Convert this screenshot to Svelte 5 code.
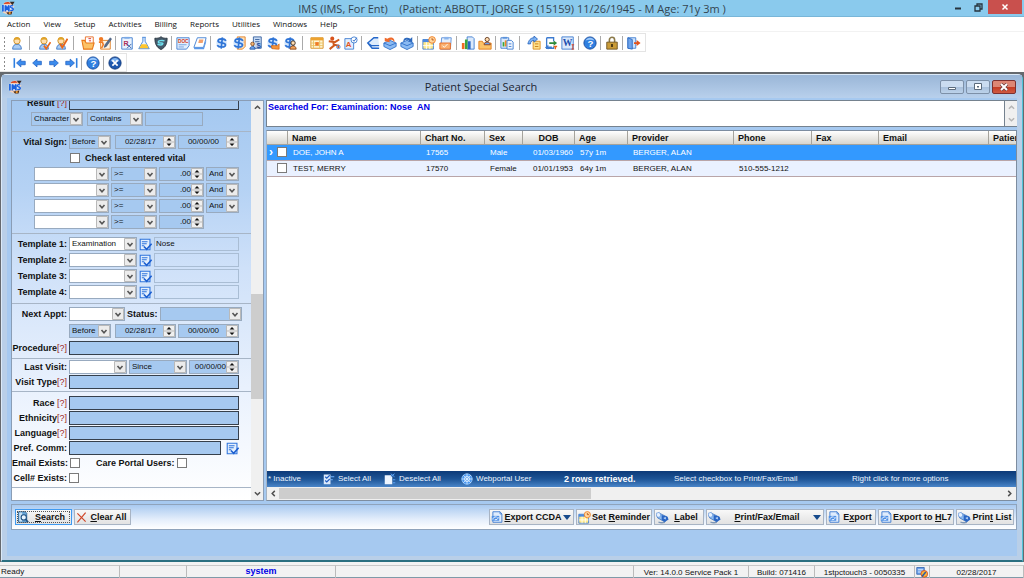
<script>
  const menus = ['Action', 'View', 'Setup', 'Activities', 'Billing', 'Reports', 'Utilities', 'Windows', 'Help'];

  const person = '<path d="M3 15c0-4 2-5.500 5-5.500s5 1.500 5 5.500z" fill="#a9cdf6" stroke="#3f78c4"/><circle cx="8" cy="5.500" r="3.600" fill="#ffe0b0" stroke="#c98a1d"/><path d="M4.300 5c0-5 7.400-5 7.400 0-2-1.500-5-1.500-7.400 0z" fill="#e0a32c"/>';
  const dollar = '<ellipse cx="7.500" cy="8" rx="6" ry="6" fill="#d3e6fc"/><path d="M12.500 5.500C11 2.300 3.500 2.600 3.500 5.600c0 3 8.500 1.600 8.500 4.600 0 3-7.500 3.200-9.500 .3M8.500 1.500l-1.500 13" fill="none" stroke="#2f74d6" stroke-width="1.900"/>';
  const orangeTick = '<path d="M8 11l2.500 3.500L15.500 7" fill="none" stroke="#e8681c" stroke-width="2"/>';
  const blueArrow = (d) => `<path d="${d}" fill="#3b8bec" stroke="#1c5cc0" stroke-width=".8"/>`;

  const icons = {
    ims: '<path d="M3 3c2-3 8-3 10 0l2 3-2 8-6 1.500L2 13z" fill="#f3d2bd"/><path d="M3 3.500C4 .5 10 .2 11 3z" fill="#d9441f"/><path d="M10 .8h5.500l-2.500 4z" fill="#372820"/><path d="M1 4.500h13v7H1z" fill="#e4eefb"/><path d="M2.200 4.500v7.500M5 12V5l2 4 2-4v7" fill="none" stroke="#1b62e0" stroke-width="2"/><path d="M14 5.500c-4-1-4 2-1.500 2.500s2 3.500-2 2.700" fill="none" stroke="#1b62e0" stroke-width="1.600"/><path d="M6 13l7-1-1 3.500H8z" fill="#4a2d1c"/><circle cx="10" cy="13.800" r="1.300" fill="#f39b2b"/>',
    person,
    personCheck: person + orangeTick,
    personEdit: person + '<path d="M7 9l2.500 4L15.500 3" fill="none" stroke="#e8681c" stroke-width="2.200"/>',
    folder: '<path d="M5 1h9v8H5z" fill="#fff" stroke="#e8681c"/><path d="M8.500 3h3M9 5.500h2.500" stroke="#d22"/><path d="M1 5h3l2 3h9l-2 7H3z" fill="#fcc267" stroke="#e8781b" stroke-width="1.200"/>',
    noteEdit: '<path d="M3 5h11v10H3z" fill="#fff4e2" stroke="#e07b1b"/><circle cx="3.500" cy="3.500" r="2.500" fill="#f07a24"/><path d="M1 7h4l1 3-2 4" fill="none" stroke="#f07a24" stroke-width="1.800"/><path d="M7 13l1-3 6-8 1.500 1.500L9.500 12z" fill="#5b6d88" stroke="#27436f" stroke-width=".6"/>',
    rx: '<path d="M2 2h12v13H2z" fill="#e9f2fd" stroke="#3d7bd0"/><path d="M5 1h6v2H5z" fill="#7aa9e6"/><text x="4" y="11" font-family="Liberation Sans" font-size="8" font-weight="bold" fill="#b0305a">R</text><path d="M8 9l5 5m0-5l-5 5" stroke="#27549e"/>',
    flask: '<path d="M6 1.500h4M6.700 1.500V6L2 14.500h12L9.300 6V1.500" fill="#e7f2ff" stroke="#3c80d8"/><path d="M5 9.500h6l2.300 4.500H2.700z" fill="#ffc62d"/>',
    shield: '<path d="M8 .8c2 1.700 4.500 2 7 1.700C15 9 13 13 8 15.500 3 13 1 9 1 2.500 3.500 2.800 6 2.500 8 .8z" fill="#45596a" stroke="#26323b"/><path d="M12 5.500c-3-1-8 0-7 1.700s6-.2 5 1.800-4 1.500-6 .4" fill="none" stroke="#6fe0ef" stroke-width="1.600"/>',
    docText: '<path d="M1 2h14v9l-3 4H1z" fill="#e3effd" stroke="#3d7bd0"/><text x="2.200" y="7.500" font-family="Liberation Sans" font-size="5.500" font-weight="bold" fill="#d33a1a">DOC</text><path d="M3 10h9M3 12.500h6" stroke="#6a9ade"/>',
    book: '<path d="M5 2h10l-3 11H1z" fill="#fff" stroke="#3d7bd0"/><path d="M7 4h5l-1 4H6z" fill="#f3a06b"/><path d="M1 13h11l3-9v3l-2.500 8H1.500z" fill="#5a97e8"/>',
    dollar,
    dollarNote: '<path d="M6 1h9v11l-3 3H6z" fill="#ffe2b8" stroke="#e07b1b"/><path d="M11 7h3m-3 3h2" stroke="#e8681c"/>' + dollar,
    dollarBuilding: '<path d="M5 1h9v13H5z" fill="#c6daf4" stroke="#355e9c"/><path d="M7 4h5M7 6.500h5" stroke="#355e9c"/><text x="8.500" y="14" font-family="Liberation Sans" font-size="9" font-weight="bold" fill="#1c4da0">$</text><path d="M1 15c0-4 6-4 6 0z" fill="#6ea4ec" stroke="#2a5aa6"/><circle cx="4" cy="9" r="2" fill="#f3b878" stroke="#8c4b1c"/>',
    dollarHand: dollar + '<path d="M6 11h7l2-2v6h-2l-6-.5z" fill="#f6953d" stroke="#d9660f" stroke-width=".8"/>',
    dollarPerson: dollar + '<path d="M8 15c0-5 7-5 7 0z" fill="#f1a25a" stroke="#8b4719"/><circle cx="11.500" cy="8" r="2.500" fill="#ffdcb0" stroke="#3b2a1c"/>',
    calendar: '<path d="M1 2h14v12H1z" fill="#fff6d6" stroke="#d78d1b"/><path d="M1 2h14v3H1z" fill="#eda22f"/><path d="M4 5v9m7-9v9M1 8h14M1 11h14" stroke="#e8c060"/><path d="M6 7h4v4H6z" fill="#f07a24"/>',
    runner: '<circle cx="6" cy="3" r="2.300" fill="#d9521c"/><path d="M2 6l7 1 5-3M7 7l1 4-5 4M8 10l5 1v3" fill="none" stroke="#cf5a1e" stroke-width="2.200"/><circle cx="13" cy="12.500" r="2" fill="none" stroke="#4b8ae0"/>',
    letterA: '<path d="M1 3h10v12H1z" fill="#e3effd" stroke="#3d7bd0"/><text x="2" y="13" font-family="Liberation Sans" font-size="9" font-weight="bold" fill="#e2531c">A</text><circle cx="11.500" cy="4.500" r="3.500" fill="#fff" stroke="#3d7bd0"/><path d="M10 4.500l1.500 1.500 3-4" fill="none" stroke="#1f5fc0"/>',
    arrowBook: '<path d="M14 2H9L2 8l4 3h9M2 8l5 6h8" fill="#dcebfc" stroke="#2467c9" stroke-width="1.500"/>',
    mailIn: '<path d="M1 8l7-3 7 3v4l-7 3.500L1 12z" fill="#8bbaf2" stroke="#2f6fc8"/><path d="M1 8l7 3 7-3" fill="none" stroke="#2f6fc8"/><path d="M2 2l3 1c4-3 9-1 8 4-2-3-4-3-6-2l1 2-6-1z" fill="#ee6a2c"/>',
    mailOut: '<path d="M1 8l7-3 7 3v4l-7 3.500L1 12z" fill="#8bbaf2" stroke="#2f6fc8"/><path d="M1 8l7 3 7-3" fill="none" stroke="#2f6fc8"/><path d="M14 1v6L9 6l1.500-1C8 4 6 4 4 7c-1-5 4-6 8-4z" fill="#2d69bd"/>',
    reminder: '<path d="M1 4h12v11H1z" fill="#ffe98a" stroke="#3d7bd0"/><path d="M1 4h12v3H1z" fill="#4b8ae0"/><path d="M5 7v8m4-8v8M1 11h12" stroke="#fff"/><circle cx="11.500" cy="4.500" r="3.800" fill="#ffd7a0" stroke="#ef7b21"/><path d="M11.500 2.500v2h2" fill="none" stroke="#b34a0b"/>',
    clipCheck: '<path d="M3 2h11l-1 13H2z" fill="#e3effd" stroke="#5b8fd8"/><path d="M6 1h5v3H6z" fill="#8ab4ec"/><path d="M1 8h12v7H1z" fill="#f9b070" stroke="#e8681c"/><path d="M4 11l2 2 4-4" stroke="#fff" fill="none"/>',
    chart: '<path d="M7 1h6l2 2v12H7z" fill="#dbe9fb" stroke="#3d7bd0"/><path d="M1 8h3v7H1z" fill="#ef6b22"/><path d="M4.500 4h3v11h-3z" fill="#3aa53d"/><path d="M8 6h3v9H8z" fill="#2a66c4"/>',
    folderPerson: '<path d="M1 6h4l1 2h9v7H1z" fill="#fcc267" stroke="#e07b1b"/><path d="M7 10c0-4 7-4 7 0z" fill="#6ea4ec" stroke="#8b3b19"/><circle cx="10.500" cy="4" r="2.400" fill="#ffdcb0" stroke="#5b3016"/>',
    report: '<path d="M1 2h9v12H1z" fill="#dbe9fb" stroke="#3d7bd0"/><path d="M3 1h5v2H3z" fill="#5a92dc"/><path d="M3 7h2v5H3z" fill="#3aa53d"/><path d="M5.500 5h2v7h-2z" fill="#ef8b22"/><path d="M8 5h5l2 2v8H8z" fill="#edf4fe" stroke="#3d7bd0"/><path d="M10 9h3m-3 3h3" stroke="#3d7bd0"/>',
    sendNote: '<path d="M7 6h8v9H7z" fill="#ffe08a" stroke="#d98b1c"/><path d="M9 9h4m-4 3h4" stroke="#c57a17"/><path d="M1 9h3C4 6 6 5 8 5v2l4-3.500L8 0v2C4 2 2 5 1 9z" fill="#7eb2f2" stroke="#2b68bf"/>',
    swap: '<path d="M3 2h8v4M3 2v12h8v-2" fill="none" stroke="#3d7bd0" stroke-width="1.500"/><path d="M6 7h5V5l4 3-4 3V9H6z" fill="#2f8b3a"/><path d="M9 12H5v-2l-4 3 4 2.500V14h4z" fill="#3d7bd0"/><path d="M11 12h4m-2 0v3" stroke="#e8681c" stroke-width="1.500"/>',
    word: '<path d="M1 1h13v14H1z" fill="#dbe9fb" stroke="#3d7bd0"/><text x="2" y="11" font-family="Liberation Serif" font-size="11" font-weight="bold" fill="#1c4fae">W</text><path d="M12 10h3m-1.500 0v5m-1.500 0h3" stroke="#d33a1a"/>',
    help: '<circle cx="8" cy="8" r="7" fill="#2f7fe0" stroke="#174a9c"/><path d="M3 5c2-4 8-4 10 0-3-1-7-1-10 0z" fill="#9cc8fa"/><text x="5" y="12.500" font-family="Liberation Sans" font-size="11" font-weight="bold" fill="#fff">?</text>',
    lock: '<path d="M5 7V4.500c0-4 6-4 6 0V7" fill="none" stroke="#8b7a4a" stroke-width="1.800"/><path d="M2 7h12v8H2z" fill="#c99b38" stroke="#6b5120"/><path d="M8 9v3.500" stroke="#3f2f12" stroke-width="2"/>',
    exit: '<path d="M1 2h9v12H1z" fill="#cfe2fb" stroke="#3d7bd0"/><path d="M1 2l5 2v11l-5-1z" fill="#6ea4ec" stroke="#2b68bf"/><path d="M8 7h3V4.500L15.500 8 11 11.500V9H8z" fill="#e2531c"/>',
    first: '<path d="M1.500 2.500v11" stroke="#2f7fe0" stroke-width="1.800"/>' + blueArrow('M4 8l5-4.500V6h5v4H9v2.500z'),
    prev: blueArrow('M3 8l5-4.500V6h5v4H8v2.500z'),
    next: blueArrow('M13 8L8 3.500V6H3v4h5v2.500z'),
    last: '<path d="M14.500 2.500v11" stroke="#2f7fe0" stroke-width="1.800"/>' + blueArrow('M12 8L7 3.500V6H2v4h5v2.500z'),
    close: '<circle cx="8" cy="8" r="7" fill="#1c57ae" stroke="#123a7c"/><path d="M2.800 6c2-5 8.500-5 10.400 0z" fill="#7fb4f2"/><path d="M5 5l6 6m0-6l-6 6" stroke="#fff" stroke-width="2"/>',
    pick: '<path d="M1.500 1.500h12v13h-12z" fill="#e3effd" stroke="#2f74dc" stroke-width="1.300"/><path d="M3.500 4.500h7M3.500 7h6M3.500 9.500h3" stroke="#2f74dc" stroke-width="1.300"/><path d="M6 10.500l3.500 3.500L15.500 7" fill="none" stroke="#1c5fd0" stroke-width="2"/>',
    find: '<path d="M2 1h9l2 2v12H2z" fill="#6ba8d8" stroke="#235e93"/><path d="M3 2h4v12H3z" fill="#c8e2f6"/><circle cx="9" cy="8.500" r="3.500" fill="#e8f5ff" stroke="#1d4f80" stroke-width="1.400"/><path d="M11.500 11l3.500 4" stroke="#1d4f80" stroke-width="2"/>',
    clear: '<path d="M2 2l12 12M14 1L2 15" stroke="#cf4527" stroke-width="1.700"/>',
    exportDoc: '<path d="M2.500 1H12l2.500 3v11h-12z" fill="#dfecfd" stroke="#3d7bd0" stroke-width="1.200"/><path d="M12 1v3h2.500" fill="none" stroke="#3d7bd0"/><path d="M1 6.500h10V13H1z" fill="#4f90e6"/><path d="M2.500 11.500c0-3 2.500-4 5-3.500M9.500 8c0 3-2 4-4.500 3.500" fill="none" stroke="#fff" stroke-width="1.200"/>',
    printer: '<path d="M1 4l4-1 9 4.500-3 6-9-5z" fill="#8ebcf0" stroke="#2b62b2" stroke-width=".8"/><path d="M0 3l4-1.500L6 5 4 8 1 7z" fill="#e4f0ff" stroke="#5b8fd8" stroke-width=".8"/><path d="M7 5l7 2 1.500 3.500-5 3L7 11z" fill="#2a66c4"/><path d="M9 8.500l3-1v3z" fill="#cfe4ff"/><path d="M3 13.500c3 1.500 6 1 8 .5" fill="none" stroke="#7d97b8" stroke-width="1.600"/>',
    selectAll: '<path d="M1 2h9v13H1z" fill="#dbe9fb"/><path d="M3 5l2 2 4-4M3 10l2 2 4-4" fill="none" stroke="#1d5bc0" stroke-width="1.500"/><path d="M10 5h5M10 9h3" stroke="#73b5ff" stroke-width="1.500"/>',
    deselectAll: '<path d="M1 3h8l2 2v10H1z" fill="#edf5ff"/><path d="M9 1l5 4m0-4l-5 4M12 9h3m-3 4h3" stroke="#5ba3f6" stroke-width="1.300"/>',
    globe: '<circle cx="8" cy="8" r="7" fill="#4b97f0" stroke="#9cccff"/><path d="M8 1v14M1 8h14M3 3l10 10M13 3L3 13" stroke="#e3f2ff"/><circle cx="8" cy="8" r="3.500" fill="none" stroke="#e3f2ff"/>',
    tray: '<path d="M1 2h10v9H1z" fill="#6ea4ec" stroke="#2559a8"/><path d="M2.500 5h7m-7 3h7" stroke="#fff"/><circle cx="11" cy="10.500" r="4.500" fill="#f7b43b" stroke="#d33a1a"/><path d="M8 14l5-6" stroke="#2559a8" stroke-width="1.800"/>'
  };

  const mainTools = [
    'person', '||', 'personCheck', 'personEdit', '||', 'folder', 'noteEdit', '|', 'rx', 'flask', 'shield', '|',
    'docText', 'book', '|', 'dollar', 'dollarNote', 'dollarBuilding', 'dollarHand', 'dollarPerson', '||',
    'calendar', 'runner', 'letterA', '|', 'arrowBook', 'mailIn', 'mailOut', '|', 'reminder', 'clipCheck', '|',
    'chart', 'folderPerson', '|', 'report', '||', 'sendNote', 'swap', 'word', '|', 'help', '|', 'lock', '|', 'exit'
  ];
  const navTools = ['first', 'prev', 'next', 'last', '|', 'help', '|', 'close'];

  const columns = [
    ['', 21], ['Name', 133], ['Chart No.', 64], ['Sex', 38], ['DOB', 52], ['Age', 53], ['Provider', 106],
    ['Phone', 78], ['Fax', 67], ['Email', 110], ['Patient', 60]
  ];
  const rows = [
    ['DOE, JOHN A', '17565', 'Male', '01/03/1960', '57y 1m', 'BERGER, ALAN', '', '', '', ''],
    ['TEST, MERRY', '17570', 'Female', '01/01/1953', '64y 1m', 'BERGER, ALAN', '510-555-1212', '', '', '']
  ];
  let selected = $state(0);

  const templates = [['Examination', 'Nose'], ['', ''], ['', ''], ['', '']];
  const joins = ['And', 'And', 'And', ''];
  const demographics = ['Race', 'Ethnicity', 'Language'];
</script>

{#snippet icon(name, size = 14)}
  <svg class="icon" width={size} height={size} viewBox="0 0 16 16" aria-hidden="true">{@html icons[name]}</svg>
{/snippet}

{#snippet combo(cls, value, label, id)}
  <select class="field combo {cls}" aria-label={label} {id}><option>{value}</option></select>
{/snippet}

{#snippet spin(cls, value, label)}
  <input class="field spin {cls}" type="text" {value} aria-label={label} />
{/snippet}

{#snippet tools(list)}
  {#each list as tool}
    {#if tool === '|' || tool === '||'}
      <span class="sep" class:wide={tool === '||'}></span>
    {:else}
      <button class="tool" aria-label={tool}>{@render icon(tool)}</button>
    {/if}
  {/each}
{/snippet}

{#snippet chevron(d)}
  <svg class="icon" width="7" height="7" viewBox="0 0 8 8" aria-hidden="true"><path {d} fill="none" stroke="currentColor" stroke-width="1.700" /></svg>
{/snippet}

<div class="app">
  <header class="titlebar">
    <span class="logo">{@render icon('ims')}</span>
    <h1>IMS (IMS, For Ent) &nbsp;&nbsp; (Patient: ABBOTT, JORGE S (15159) 11/26/1945 - M Age: 71y 3m )</h1>
    <div class="syscmds">
      <button aria-label="Minimize"><svg width="8" height="8" viewBox="0 0 8 8"><path d="M1 5.500h6" stroke="#26333d" stroke-width="2" /></svg></button>
      <button aria-label="Restore"><svg width="9" height="9" viewBox="0 0 9 9"><path d="M1 3h5v5H1zM3 2.500V1h5v5H6.500" fill="none" stroke="#26333d" stroke-width="1.300" /></svg></button>
      <button class="quit" aria-label="Close"><svg width="8" height="8" viewBox="0 0 8 8"><path d="M1.500 1.500l5 5m0-5l-5 5" stroke="#fff" stroke-width="1.500" /></svg></button>
    </div>
  </header>

  <nav class="menubar">
    {#each menus as menu}<button>{menu}</button>{/each}
  </nav>

  <div class="toolbars">
    <div class="toolbar"><span class="grip"></span>{@render tools(mainTools)}</div>
    <div class="toolbar nav"><span class="grip"></span>{@render tools(navTools)}</div>
  </div>

  <main class="workspace">
    <section class="window">
      <div class="wintitle">
        <span class="winlogo">{@render icon('ims')}</span>
        <h2>Patient Special Search</h2>
        <div class="wincmds">
          <button aria-label="Minimize window"><svg width="10" height="8" viewBox="0 0 10 8"><path d="M1.500 4.500h7v2h-7z" fill="#fff" stroke="#5c6b7c" /></svg></button>
          <button aria-label="Maximize window"><svg width="10" height="8" viewBox="0 0 10 8"><path d="M1.500 .5h7v6h-7z" fill="#fff" stroke="#5c6b7c" /><path d="M4 3h2v1.500H4z" fill="#5c6b7c" /></svg></button>
          <button class="winclose" aria-label="Close window"><svg width="10" height="8" viewBox="0 0 10 8"><path d="M2 1l6 6m0-6L2 7" stroke="#6b3a3a" stroke-width="3.400" /><path d="M2 1l6 6m0-6L2 7" stroke="#fff" stroke-width="2" /></svg></button>
        </div>
      </div>

      <div class="body">
        <div class="panes">
          <div class="filters">
            <form class="form">
              <div class="group">
                <div class="row"><label for="result">Result <i>[?]</i></label><input id="result" class="field strong fill" type="text" /></div>
                <div class="row indent-a">
                  {@render combo('w52', 'Character', 'Result type')}
                  <span class="space"></span>
                  {@render combo('w56', 'Contains', 'Result match')}
                  <input class="field w58" type="text" aria-label="Result value" />
                </div>
              </div>

              <div class="group">
                <div class="row">
                  <label for="vital">Vital Sign:</label>
                  {@render combo('w42', 'Before', 'Vital sign period', 'vital')}
                  <span class="space"></span>
                  {@render spin('date', '02/28/17', 'Vital sign from')}
                  {@render spin('date', '00/00/00', 'Vital sign to')}
                </div>
                <div class="row indent-b"><input type="checkbox" id="lastvital" /><label class="plain" for="lastvital">Check last entered vital</label></div>
                {#each joins as join, i}
                  <div class="row indent-c">
                    {@render combo('w75 white', '', `Vital ${i + 1}`)}
                    {@render combo('w46', '>=', `Vital ${i + 1} operator`)}
                    {@render spin('num', '.00', `Vital ${i + 1} value`)}
                    {#if join}{@render combo('w33', join, `Vital ${i + 1} join`)}{/if}
                  </div>
                {/each}
              </div>

              <div class="group">
                {#each templates as [kind, text], i}
                  <div class="row">
                    <label for="template{i}">Template {i + 1}:</label>
                    {@render combo('w68 white', kind, `Template ${i + 1}`, `template${i}`)}
                    <button type="button" class="pick" aria-label="Choose template {i + 1}">{@render icon('pick', 13)}</button>
                    <input class="field clear fill" type="text" value={text} aria-label="Template {i + 1} text" />
                  </div>
                {/each}
              </div>

              <div class="group loose">
                <div class="row">
                  <label for="appt">Next Appt:</label>
                  {@render combo('w56 white', '', 'Next appointment', 'appt')}
                  <label class="plain" for="status">Status:</label>
                  {@render combo('fill wider', '', 'Status', 'status')}
                </div>
                <div class="row">
                  <span class="label"></span>
                  {@render combo('w42', 'Before', 'Appointment period')}
                  <span class="space"></span>
                  {@render spin('date', '02/28/17', 'Appointment from')}
                  {@render spin('date', '00/00/00', 'Appointment to')}
                </div>
                <div class="row"><label for="procedure">Procedure<i>[?]</i></label><input id="procedure" class="field strong fill" type="text" /></div>
              </div>

              <div class="group tight">
                <div class="row">
                  <label for="lastvisit">Last Visit:</label>
                  {@render combo('w58 white', '', 'Last visit', 'lastvisit')}
                  {@render combo('w58', 'Since', 'Last visit period')}
                  {@render spin('fill', '00/00/00', 'Last visit date')}
                </div>
                <div class="row"><label for="visittype">Visit Type<i>[?]</i></label><input id="visittype" class="field strong fill" type="text" /></div>
              </div>

              <div class="group people">
                {#each demographics as name}
                  <div class="row"><label for={name}>{name}{name === 'Race' ? ' ' : ''}<i>[?]</i></label><input id={name} class="field strong fill" type="text" /></div>
                {/each}
                <div class="row comm">
                  <label for="comm">Pref. Comm:</label><input id="comm" class="field strong fill" type="text" />
                  <button type="button" class="pick" aria-label="Choose preferred communication">{@render icon('pick', 13)}</button>
                </div>
                <div class="row">
                  <label for="email">Email Exists:</label><input type="checkbox" id="email" />
                  <label class="plain portal" for="portal">Care Portal Users:</label><input type="checkbox" id="portal" />
                </div>
                <div class="row"><label for="cell">Cell# Exists:</label><input type="checkbox" id="cell" /></div>
              </div>
            </form>
            <div class="vscroll">
              {@render chevron('M1 5.500L4 2.500l3 3')}
              <div class="vtrack"><span class="vthumb"></span></div>
              {@render chevron('M1 2.500l3 3 3-3')}
            </div>
          </div>

          <div class="results">
            <div class="searched">
              <p>Searched For: Examination: Nose &nbsp;AN</p>
              <div class="vscroll idle">{@render chevron('M1 5.500L4 2.500l3 3')}{@render chevron('M1 2.500l3 3 3-3')}</div>
            </div>
            <div class="gridbox">
              <div class="tablewrap">
                <table>
                  <colgroup>{#each columns as [, width]}<col style="width:{width}px" />{/each}</colgroup>
                  <thead><tr>{#each columns as [name]}<th class:dob={name === 'DOB'}>{name}</th>{/each}</tr></thead>
                  <tbody>
                    {#each rows as row, i}
                      <tr class:selected={selected === i} onclick={() => (selected = i)}>
                        <td class="mark"><span>{selected === i ? '›' : ''}</span><input type="checkbox" aria-label="Select {row[0]}" /></td>
                        {#each row as cell, c}<td class:right={c === 3}>{cell}</td>{/each}
                      </tr>
                    {/each}
                  </tbody>
                </table>
              </div>
              <div class="legend">
                <span>* Inactive</span>
                <button>{@render icon('selectAll', 12)}Select All</button>
                <button>{@render icon('deselectAll', 12)}Deselect All</button>
                <span>{@render icon('globe', 12)}Webportal User</span>
                <strong>2 rows retrieved.</strong>
                <span>Select checkbox to Print/Fax/Email</span>
                <span>Right click for more options</span>
              </div>
              <div class="hscroll">
                {@render chevron('M5.500 1l-3 3 3 3')}
                <div class="htrack"><span class="hthumb"></span></div>
                {@render chevron('M2.500 1l3 3-3 3')}
              </div>
            </div>
          </div>
        </div>

        <div class="actions">
          <button class="act default w57">{@render icon('find', 12)}<span><u>S</u>earch</span></button>
          <button class="act w57">{@render icon('clear', 11)}<span><u>C</u>lear All</span></button>
          <span class="grow"></span>
          <button class="act w85">{@render icon('exportDoc', 12)}<span><u>E</u>xport CCDA</span><b class="drop"></b></button>
          <button class="act w76">{@render icon('reminder', 13)}<span>Set <u>R</u>eminder</span></button>
          <button class="act w50">{@render icon('printer', 13)}<span><u>L</u>abel</span></button>
          <button class="act w118">{@render icon('printer', 13)}<span><u>P</u>rint/Fax/Email</span><b class="drop"></b></button>
          <button class="act w50">{@render icon('exportDoc', 12)}<span>E<u>x</u>port</span></button>
          <button class="act w76">{@render icon('exportDoc', 12)}<span>Export to <u>H</u>L7</span></button>
          <button class="act w58">{@render icon('printer', 13)}<span>Prin<u>t</u> List</span></button>
        </div>
      </div>
    </section>
  </main>

  <footer class="statusbar">
    <span class="ready">Ready</span>
    <span></span>
    <strong>system</strong>
    <span></span>
    <span class="mid">Ver: 14.0.0 Service Pack 1</span>
    <span class="mid">Build: 071416</span>
    <span class="mid">1stpctouch3 - 0050335</span>
    <span class="mid">{@render icon('tray', 12)}</span>
    <span class="mid">02/28/2017</span>
  </footer>
</div>

<style>
  :global(body) { margin: 0; }
  .app { display: flex; flex-direction: column; min-height: 100vh; background: #fff; color: #111; font: 8px/12px "Liberation Sans", Arial, sans-serif; overflow: hidden; }
  .app * { box-sizing: border-box; }
  button, input, select { font: inherit; color: inherit; margin: 0; padding: 0; border: 0; border-radius: 0; background: none; }
  h1, h2, p { margin: 0; font-weight: 400; }
  .icon { display: block; flex: none; }

  .titlebar { display: grid; grid-template-columns: 110px 1fr 110px; height: 17px; background: #8acaed; border-bottom: 1px solid #78b6d8; }
  .titlebar h1 { text-align: center; font: 11px/17px "Open Sans", sans-serif; color: #34444f; white-space: nowrap; }
  .logo { padding: 1px; }
  .syscmds { display: flex; justify-content: flex-end; align-items: flex-start; padding-right: 2px; }
  .syscmds button { width: 20px; height: 14px; display: grid; place-items: center; }
  .syscmds .quit { width: 34px; background: #c9504d; }

  .menubar { display: flex; height: 15px; padding-left: 1px; border-bottom: 1px solid #f2f2f2; }
  .menubar button { padding: 0 7px 0 6px; font: 8px/14px "Open Sans", sans-serif; color: #111; }

  .toolbars { display: flex; flex-direction: column; align-items: flex-start; gap: 1px; padding: 1px 0 0; }
  .toolbar { display: flex; align-items: center; height: 19px; padding-right: 3px; border: 1px solid #e4e4e4; border-left: 0; }
  .grip { width: 3px; height: 14px; margin: 0 2px 0 3px; background: radial-gradient(circle, #8a8a8a 1px, transparent 1px) 0 0 / 3px 4px; }
  .nav .grip { margin-right: 5px; }
  .tool { display: grid; place-items: center; width: 17px; height: 17px; }
  .sep { width: 1px; height: 14px; margin: 0 2px; background: #aaa; }
  .sep.wide { margin: 0 5px 0 4px; }

  .workspace { flex: 1; display: flex; background: #65696e; padding: 2px 1px 0 1px; }
  .window { flex: 1; min-width: 0; display: flex; flex-direction: column; border: 1px solid #dbe9f7; border-right-color: #4fc3d8; border-bottom: 2px solid #2a6f80; border-radius: 5px 5px 0 0; background: #b9cfe8; padding: 0 5px 4px; }
  .wintitle { display: grid; grid-template-columns: 90px 1fr 90px; align-items: center; height: 23px; margin: 0 -5px; padding: 0 5px; background: linear-gradient(#9ab6d7, #b8d0ec); }
  .winlogo { padding: 0 1px; }
  .wintitle h2 { text-align: center; font: 11px/22px "Open Sans", sans-serif; color: #1c2632; padding-right: 62px; }
  .wincmds { display: flex; justify-content: flex-end; gap: 2px; padding-right: 1px; }
  .wincmds button { display: grid; place-items: center; width: 24px; height: 14px; border: 1px solid #7d90a8; border-radius: 2px; background: linear-gradient(#cbdcf0 50%, #a9c0dc 50%, #bcd2ea); }
  .wincmds .winclose { border-color: #7c3030; background: linear-gradient(#dd8674 50%, #c43a22 50%, #cf5a42); }

  .body { flex: 1; display: flex; flex-direction: column; background: #a6c9f0; padding: 2px 0 26px 4px; }
  .panes { flex: 1; display: grid; grid-template-columns: 253px 1fr; gap: 2px; }

  .filters { display: flex; border: 1px solid #8a9db5; background: linear-gradient(#a4c8f0, #b5d2f4 22%, #cfe1f9 42%, #e9f1fd 72%, #fff); overflow: hidden; }
  .form { flex: 1; min-width: 0; margin-top: -5px; }
  .group { display: flex; flex-direction: column; gap: 2px; padding: 3px 12px 4px 0; border-bottom: 1px solid #a7b5c6; }
  .group:first-child { padding: 0 12px 5px 0; }
  .loose { gap: 3px; padding-bottom: 3px; }
  .tight { gap: 1px; padding-top: 1px; padding-bottom: 2px; }
  .people { gap: 1px; padding-top: 4px; padding-bottom: 2px; }
  .row { display: flex; align-items: center; gap: 2px; height: 14px; white-space: nowrap; }
  .indent-a { padding-left: 19px; }
  .indent-b { padding-left: 58px; gap: 5px; }
  .indent-c { padding-left: 22px; }
  .row label, .label { flex: 0 0 55px; display: flex; justify-content: flex-end; font-size: 9px; font-weight: 700; }
  .row label { white-space: pre; }
  .row label.plain { flex: none; }
  .row label i { font-style: normal; font-weight: 400; color: #a02828; }
  .row .portal { margin-left: 14px; }
  .comm .pick { margin-left: 3px; }
  .space { width: 0; }

  .field { height: 14px; min-width: 0; border: 1px solid #98aabf; background-color: #a6c9f0; padding: 0 2px; line-height: 12px; outline: none; }
  .fill { flex: 1; }
  .wider { margin-right: -3px; }
  .field.strong { border-color: #36404c; }
  .field.clear { background: transparent; padding: 0 1px 1px; border-color: #a9bdd4; }
  .field.white { background-color: #fff; }
  .combo { appearance: none; flex-shrink: 0; padding-right: 12px; background-repeat: no-repeat; background-position: right center; background-image: url("data:image/svg+xml,%3Csvg xmlns='http://www.w3.org/2000/svg' width='12' height='12'%3E%3Cpath d='M.5 .5h11v11H.5z' fill='%23ececec' stroke='%23b9b9b9'/%3E%3Cpath d='M3.500 5l2.500 2.700L8.500 5' fill='none' stroke='%23555' stroke-width='1.600'/%3E%3C/svg%3E"); }
  .combo.fill { flex-shrink: 1; }
  .spin { padding: 0 12px 1px 2px; text-align: right; background-repeat: no-repeat; background-position: right center; background-image: url("data:image/svg+xml,%3Csvg xmlns='http://www.w3.org/2000/svg' width='12' height='12'%3E%3Cpath d='M.5 .5h11v11H.5zM0 6h12' fill='%23f0f0f0' stroke='%23b9b9b9'/%3E%3Cpath d='M3.500 4.500L6 2l2.500 2.500zM3.500 7.500L6 10l2.500-2.500z' fill='%23111'/%3E%3C/svg%3E"); }
  .date { width: 61px; text-align: center; }
  .num { width: 45px; }
  .w33 { width: 33px; } .w42 { width: 42px; } .w46 { width: 46px; } .w50 { width: 50px; } .w52 { width: 52px; }
  .w56 { width: 56px; } .w57 { width: 57px; } .w58 { width: 58px; } .w68 { width: 68px; } .w75 { width: 75px; }
  .w76 { width: 76px; } .w85 { width: 85px; } .w118 { width: 118px; }
  input[type="checkbox"] { appearance: none; flex: none; width: 10px; height: 10px; border: 1px solid #7a7a7a; background: #fff; }
  input[type="checkbox"]:checked { background: #2a66c4; box-shadow: inset 0 0 0 2px #fff; }
  .pick { width: 13px; height: 13px; }

  .vscroll { flex: 0 0 12px; display: flex; flex-direction: column; align-items: center; justify-content: space-between; padding: 3px 0; background: #f0f0f0; color: #505050; }
  .vtrack { flex: 1; align-self: stretch; display: flex; flex-direction: column; margin: 2px 0; }
  .vtrack::before { content: ""; flex: 181; }
  .vthumb { flex: 104; background: #cdcdcd; }
  .vtrack::after { content: ""; flex: 89; }
  .idle { color: #b5b5b5; }

  .results { display: flex; flex-direction: column; gap: 3px; min-width: 0; }
  .searched { display: flex; height: 27px; border: 1px solid #75828f; border-right: 0; background: #fff; }
  .searched p { flex: 1; padding: 0 1px; font-size: 9px; font-weight: 700; color: #0000e6; border-right: 1px solid #75828f; }
  .gridbox { flex: 1; display: flex; flex-direction: column; border: 1px solid #7d8da0; border-left-color: #a4b3c4; background: #fff; }
  .tablewrap { flex: 1; overflow: hidden; height: 0; }
  table { width: 782px; min-width: 100%; table-layout: fixed; border-collapse: separate; border-spacing: 0; white-space: nowrap; }
  th { height: 14px; padding: 0 4px; text-align: left; font-size: 9px; font-weight: 700; line-height: 12px; background: linear-gradient(#fff, #d8d6cf); border-right: 1px solid #a5a39c; border-bottom: 1px solid #a5a39c; }
  th.dob { text-align: center; }
  td { height: 16px; padding: 0 5px; line-height: 14px; overflow: hidden; background: #eaf1ff; border-bottom: 1px solid #b9a5a8; }
  td.right { text-align: right; padding: 0 2px; }
  .selected td { background: #3399ff; color: #fff; }
  td.mark { padding: 0; }
  .mark span { display: inline-block; width: 10px; padding-left: 2px; font-size: 12px; line-height: 10px; font-weight: 700; vertical-align: middle; }
  .mark input { vertical-align: middle; }

  .legend { display: grid; grid-template-columns: 55px 61px 77px 103px 110px 178px 1fr; align-items: center; height: 16px; padding-left: 1px; white-space: nowrap; color: #eef5ff; background: linear-gradient(#0d3a78, #1d5496 50%, #4a85c8); }
  .legend button, .legend span { display: flex; align-items: center; gap: 3px; }
  .legend strong { color: #fff; font-size: 9px; }
  .hscroll { display: flex; align-items: center; height: 13px; padding: 0 3px; background: #f0f0f0; color: #505050; }
  .htrack { flex: 1; align-self: stretch; margin: 1px 2px; }
  .hthumb { display: block; width: 43%; height: 100%; background: #cdcdcd; }

  .actions { display: flex; align-items: center; gap: 2px; height: 26px; margin-top: 3px; padding: 0 2px 0 3px; border: 1px solid #8fa3bb; background: linear-gradient(#a9caf0, #e4eefb 60%, #fff); }
  .grow { flex: 1; }
  .act { display: flex; align-items: center; gap: 1px; height: 16px; padding: 0 1px; border: 1px solid #a8b4c4; background: linear-gradient(#f8f8f8, #e2e2e2); font-size: 9px; font-weight: 700; white-space: nowrap; }
  .act span { flex: 1; text-align: center; }
  .default { border-color: #3f9af0; outline: 1px dotted #555; outline-offset: -3px; }
  .drop { border: 4px solid transparent; border-top: 5px solid #164a8c; border-bottom: 0; margin-right: 1px; }

  .statusbar { display: grid; grid-template-columns: 120px 67px 149px 1fr 115px 66px 100px 15px 94px; height: 16px; padding: 3px 0 0; background: #f2f2f2; border-bottom: 1px solid #7f9aa8; white-space: nowrap; }
  .statusbar > * { border-right: 1px solid #bbb; border-top: 1px solid #c8c8c8; line-height: 11px; }
  .statusbar .ready { padding-left: 1px; }
  .statusbar strong { text-align: center; color: #0000e6; font-size: 9px; }
  .mid { display: flex; justify-content: center; align-items: center; }
</style>
